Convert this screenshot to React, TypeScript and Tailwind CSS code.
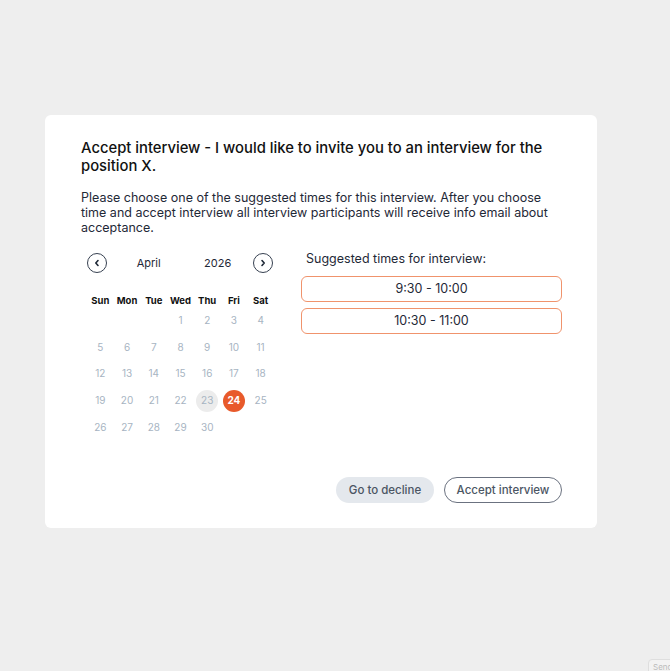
import React from "react";

const weekdays = ["Sun", "Mon", "Tue", "Wed", "Thu", "Fri", "Sat"];

// April 2026 starts on Wednesday
const days: (number | null)[] = [
  null, null, null,
  ...Array.from({ length: 30 }, (_, i) => i + 1),
];

const times = ["9:30 - 10:00", "10:30 - 11:00"];

const Chevron = ({ dir }: { dir: "left" | "right" }) => (
  <svg width="8" height="8" viewBox="0 0 8 8" fill="none">
    <path
      d={dir === "left" ? "M5 1.5 L2.8 4 L5 6.5" : "M3 1.5 L5.2 4 L3 6.5"}
      stroke="#1f2937"
      strokeWidth="1.6"
      strokeLinecap="round"
      strokeLinejoin="round"
    />
  </svg>
);

const Calendar = () => {
  return (
    <div className="w-[187px] shrink-0">
      <div className="flex items-center h-5">
        <button className="w-5 h-5 rounded-full border border-[#374151] flex items-center justify-center">
          <Chevron dir="left" />
        </button>
        <div className="flex-1 flex justify-around pl-2 text-[11px] text-[#1f2937]">
          <span>April</span>
          <span>2026</span>
        </div>
        <button className="w-5 h-5 rounded-full border border-[#374151] flex items-center justify-center mr-[1px]">
          <Chevron dir="right" />
        </button>
      </div>
      <div className="grid grid-cols-7 mt-[21px]">
        {weekdays.map((d) => (
          <div key={d} className="text-center text-[9.5px] font-bold text-[#111] h-[13px] leading-[13px]">
            {d}
          </div>
        ))}
      </div>
      <div className="grid grid-cols-7">
        {days.map((d, i) => (
          <div key={i} className="h-[26.8px] flex items-center justify-center">
            {d !== null && (
              <span
                className={
                  d === 24
                    ? "w-[22px] h-[22px] rounded-full bg-[#e85a2b] text-white font-bold text-[10px] flex items-center justify-center"
                    : d === 23
                    ? "w-[22px] h-[22px] rounded-full bg-[#ececec] text-[#a7b4c2] text-[10px] flex items-center justify-center"
                    : "w-[22px] h-[22px] text-[#a7b4c2] text-[10px] flex items-center justify-center"
                }
              >
                {d}
              </span>
            )}
          </div>
        ))}
      </div>
    </div>
  );
};

export default function App() {
  return (
    <div className="min-h-[671px] bg-[#eeeeee] pt-[115px] pl-[45px] font-['Inter',sans-serif] relative overflow-hidden">
      <div className="w-[552px] h-[413px] bg-white rounded-md pt-6 pl-9 pr-[35px] flex flex-col">
        <h1 className="text-[14.8px] font-medium leading-[18px] text-[#111]">
          Accept interview - I would like to invite you to an interview for the position X.
        </h1>
        <p className="mt-[15px] text-[12.5px] leading-[15px] text-[#1f2937]">
          Please choose one of the suggested times for this interview. After you choose time and accept interview all interview participants will receive info email about acceptance.
        </p>
        <div className="flex mt-[18px] ml-[6px] gap-[27px]">
          <Calendar />
          <div className="flex-1">
            <div className="pl-[5px] text-[12.5px] text-[#1f2937] leading-[15px] -mt-[2px]">
              Suggested times for interview:
            </div>
            <div className="flex flex-col gap-[6px] mt-[10px]">
              {times.map((t) => (
                <button
                  key={t}
                  className="h-[26px] w-full rounded-md border border-[#f0936c] text-[12.5px] text-[#1f2937] pt-[1px]"
                >
                  {t}
                </button>
              ))}
            </div>
          </div>
        </div>
        <div className="mt-auto mb-[25px] flex justify-end gap-[10px]">
          <button className="h-[26px] w-[98px] rounded-full bg-[#e4e8ed] text-[11.5px] font-medium text-[#4b5563] pt-[1px]">
            Go to decline
          </button>
          <button className="h-[26px] w-[118px] rounded-full border border-[#6b7280] text-[11.5px] font-medium text-[#4b5563] pt-[1px]">
            Accept interview
          </button>
        </div>
      </div>
      <div className="absolute left-[648px] top-[659px] w-[40px] h-[20px] rounded-sm border border-[#dedede] bg-[#f3f3f3] text-[8px] leading-[10px] text-[#bbb] pl-[4px] pt-[2px]">
        Send
      </div>
    </div>
  );
}
